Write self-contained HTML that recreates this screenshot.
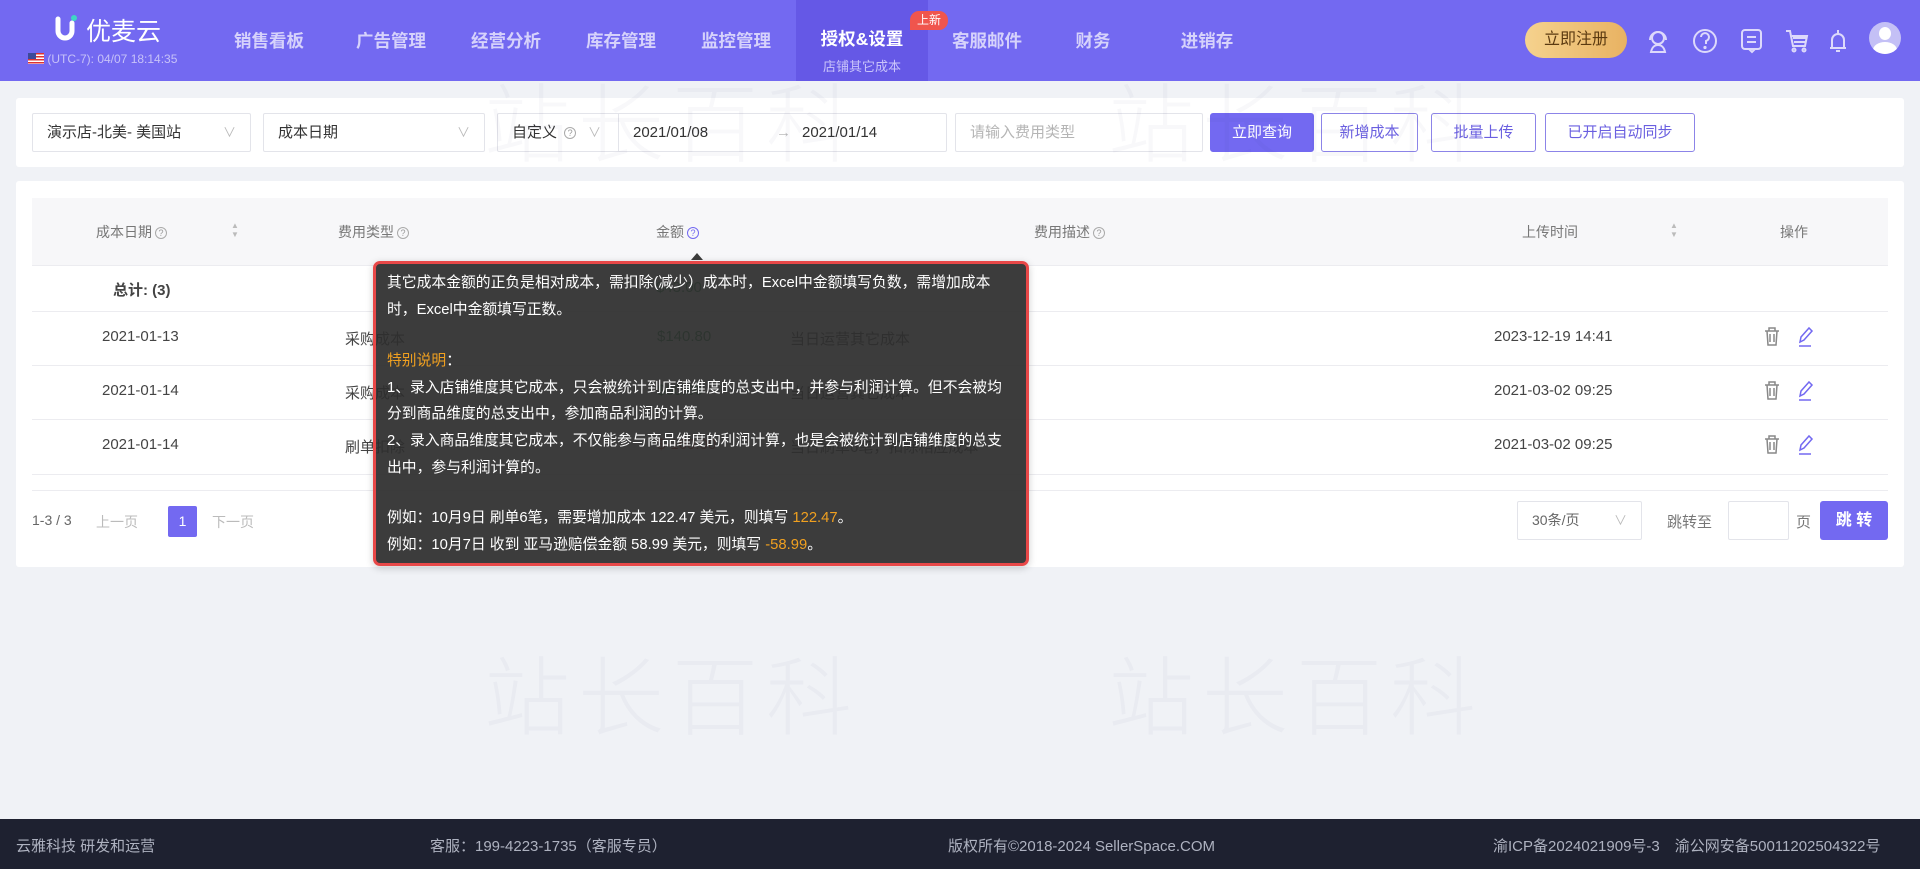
<!DOCTYPE html>
<html><head><meta charset="utf-8"><style>
*{box-sizing:border-box;margin:0;padding:0}
body{width:1920px;height:869px;overflow:hidden;background:#f0f2f6;font-family:"Liberation Sans","Noto Sans CJK SC",sans-serif;position:relative;color:#333}
.abs{position:absolute}
.hdr{left:0;top:0;width:1920px;height:81px;background:#7369f1}
.nav{top:28px;font-size:17.5px;font-weight:bold;color:#d6d2fb;transform:translateX(-50%);white-space:nowrap}
.wm{font-size:86px;color:rgba(60,70,100,.035);letter-spacing:8px;white-space:nowrap;font-weight:300;z-index:5}
.card{background:#fff;border-radius:3px}
.inp{top:113px;height:39px;border:1px solid #e3e4ea;border-radius:2px;background:#fff;font-size:15px;color:#333;line-height:37px;padding-left:14px}
.chev{position:absolute;right:14px;top:0;color:#bbb;font-size:13px}
.btn{top:113px;height:39px;border:1px solid #8c84e8;border-radius:3px;font-size:15px;color:#6a5fe0;line-height:37px;text-align:center;background:#fff}
.th{top:222px;font-size:14px;color:#777;white-space:nowrap}
.q{display:inline-block;width:12px;height:12px;border:1px solid #aaa;border-radius:50%;font-size:9px;line-height:10px;text-align:center;color:#999;vertical-align:1px;margin-left:3px}
.td{font-size:15px;color:#444;white-space:nowrap}
.line{left:32px;width:1856px;height:1px;background:#ececf0}
.tip{left:373px;top:261px;width:656px;height:305px;border:3px solid #e84848;border-radius:7px;background:rgba(45,45,45,.93);color:#fff;font-size:14.8px;padding:6px 0 0 11px;line-height:26.6px;box-shadow:0 2px 8px rgba(0,0,0,.2);white-space:nowrap;z-index:6}
.or{color:#f0a020}
.ft{top:835px;font-size:15px;color:#aeb2c0;white-space:nowrap}
</style></head><body>
<div class="abs hdr"></div>
<div class="abs" style="left:796px;top:0;width:132px;height:81px;background:#6558e6"></div>
<svg class="abs" style="left:52px;top:14px" width="30" height="30" viewBox="0 0 30 30"><path d="M6 5v12a7 7 0 0 0 14 0V9" stroke="#fff" stroke-width="5" fill="none" stroke-linecap="round"/><circle cx="22" cy="4" r="3" fill="#3fd6c4"/></svg>
<div class="abs" style="left:86px;top:12px;font-size:25px;color:#fff;">优麦云</div>
<div class="abs" style="left:28px;top:52px;font-size:12px;color:#c7c2f8;white-space:nowrap"><span style="display:inline-block;width:16px;height:11px;background:repeating-linear-gradient(#d33 0 1.5px,#fff 1.5px 3px);position:relative;vertical-align:-1px"><span style="position:absolute;left:0;top:0;width:8px;height:6px;background:#3c4a9a"></span></span> (UTC-7): 04/07 18:14:35</div>
<div class="abs nav" style="left:269px">销售看板</div>
<div class="abs nav" style="left:391px">广告管理</div>
<div class="abs nav" style="left:506px">经营分析</div>
<div class="abs nav" style="left:621px">库存管理</div>
<div class="abs nav" style="left:736px">监控管理</div>
<div class="abs nav" style="left:862px;top:26px;color:#fff">授权&amp;设置</div>
<div class="abs" style="left:862px;top:56px;transform:translateX(-50%);font-size:13px;color:#c9c4fa;white-space:nowrap">店铺其它成本</div>
<div class="abs" style="left:910px;top:11px;width:38px;height:19px;background:#f0554d;border-radius:9px 9px 9px 0;color:#fff;font-size:12px;text-align:center;line-height:19px">上新</div>
<div class="abs nav" style="left:987px">客服邮件</div>
<div class="abs nav" style="left:1093px">财务</div>
<div class="abs nav" style="left:1207px">进销存</div>
<div class="abs" style="left:1525px;top:22px;width:102px;height:36px;border-radius:18px;background:linear-gradient(90deg,#f5d28e,#e8b262);color:#5b3a10;font-size:16px;text-align:center;line-height:36px">立即注册</div>
<svg class="abs" style="left:1646px;top:26px" width="250" height="30" viewBox="0 0 250 30" fill="none" stroke="#ddd9fb" stroke-width="2">
<circle cx="12" cy="12" r="6"/><path d="M4 14a8 8 0 0 1 16 0M5 26c1-5 4-7 7-7s6 2 7 7z"/>
<circle cx="59" cy="15" r="11"/><path d="M55 11a4 4 0 1 1 5 4v3"/><circle cx="59" cy="21.5" r=".6" fill="#ddd9fb"/>
<rect x="96" y="4" width="19" height="19" rx="3"/><path d="M101 11h9M101 16h9M103 23l3 3 3-3"/>
<path d="M140 5h4l3 15h12l2-10h-15M147 12h13M148 16h12"/><circle cx="148" cy="24" r="1.5"/><circle cx="158" cy="24" r="1.5"/>
<path d="M186 22V14a6 6 0 0 1 12 0v8h2h-16M190 25h4M192 4v4"/>
</svg>
<div class="abs" style="left:1869px;top:22px;width:32px;height:32px;border-radius:50%;background:#c4c0f6;overflow:hidden"><div style="position:absolute;left:10px;top:5px;width:12px;height:13px;border-radius:50%;background:#fff"></div><div style="position:absolute;left:4px;top:20px;width:24px;height:16px;border-radius:50%;background:#fff"></div></div>

<div class="abs card" style="left:16px;top:98px;width:1888px;height:69px"></div>
<div class="abs inp" style="left:32px;width:219px">演示店-北美- 美国站<span class="chev">∨</span></div>
<div class="abs inp" style="left:263px;width:222px">成本日期<span class="chev">∨</span></div>
<div class="abs inp" style="left:497px;width:450px">自定义 <span class="q">?</span><span style="position:absolute;left:90px;color:#bbb;font-size:13px">∨</span><span style="position:absolute;left:120px;top:0;bottom:0;border-left:1px solid #e3e4ea"></span><span style="position:absolute;left:135px">2021/01/08</span><span style="position:absolute;left:278px;color:#bbb">→</span><span style="position:absolute;left:304px">2021/01/14</span></div>
<div class="abs inp" style="left:955px;width:248px;color:#b5b5b5">请输入费用类型</div>
<div class="abs btn" style="left:1210px;width:104px;background:#7369f1;border-color:#7369f1;color:#fff">立即查询</div>
<div class="abs btn" style="left:1321px;width:97px">新增成本</div>
<div class="abs btn" style="left:1431px;width:105px">批量上传</div>
<div class="abs btn" style="left:1545px;width:150px">已开启自动同步</div>

<div class="abs card" style="left:16px;top:181px;width:1888px;height:386px"></div>
<div class="abs" style="left:32px;top:198px;width:1856px;height:67px;background:#f7f7f9"></div>
<div class="abs th" style="left:96px">成本日期<span class="q">?</span></div>
<div class="abs" style="left:231px;top:221px;font-size:8px;color:#bbb;line-height:9px">▲<br>▼</div>
<div class="abs th" style="left:338px">费用类型<span class="q">?</span></div>
<div class="abs th" style="left:656px">金额<span class="q" style="border-color:#7369f1;color:#7369f1">?</span></div>
<div class="abs th" style="left:1034px">费用描述<span class="q">?</span></div>
<div class="abs th" style="left:1522px">上传时间</div>
<div class="abs" style="left:1670px;top:221px;font-size:8px;color:#bbb;line-height:9px">▲<br>▼</div>
<div class="abs th" style="left:1780px">操作</div>
<div class="abs line" style="top:265px"></div>
<div class="abs td" style="left:113px;top:279px;font-weight:bold">总计: (3)</div>
<div class="abs td" style="left:656px;top:279px;color:#2a8a4a">$43.00</div>
<div class="abs line" style="top:311px"></div>
<div class="abs line" style="top:365px"></div>
<div class="abs line" style="top:419px"></div>
<div class="abs line" style="top:474px"></div>
<div class="abs line" style="top:490px"></div>
<div class="abs td" style="left:102px;top:328px">2021-01-13</div>
<div class="abs td" style="left:102px;top:382px">2021-01-14</div>
<div class="abs td" style="left:102px;top:436px">2021-01-14</div>
<div class="abs td" style="left:345px;top:328px">采购成本</div>
<div class="abs td" style="left:345px;top:382px">采购成本</div>
<div class="abs td" style="left:345px;top:436px">刷单扣除</div>
<div class="abs td" style="left:657px;top:328px;color:#2a8a4a">$140.80</div>
<div class="abs td" style="left:657px;top:382px;color:#2a8a4a">$60.00</div>
<div class="abs td" style="left:657px;top:436px;color:#c43030">$-160.00</div>
<div class="abs td" style="left:790px;top:328px">当日运营其它成本</div>
<div class="abs td" style="left:790px;top:382px">当日运营其它成本</div>
<div class="abs td" style="left:790px;top:436px">当日刷单6笔，扣除相应成本</div>
<div class="abs td" style="left:1494px;top:328px">2023-12-19 14:41</div>
<div class="abs td" style="left:1494px;top:382px">2021-03-02 09:25</div>
<div class="abs td" style="left:1494px;top:436px">2021-03-02 09:25</div>
<svg class="abs" style="left:1762px;top:326px" width="60" height="150" viewBox="0 0 60 150" fill="none" stroke-width="1.5">
<g id="r"><g stroke="#888"><path d="M3 5h14M7 5V2h6v3M5 5l1 14h8l1-14M8 8v8M12 8v8"/></g><g stroke="#7369f1"><path d="M38 16l1-5 8-9 3 3-8 9z M37 20h12"/></g></g>
<use href="#r" y="54"/><use href="#r" y="108"/></svg>

<div class="abs" style="left:32px;top:512px;font-size:14px;color:#666">1-3 / 3</div>
<div class="abs" style="left:96px;top:512px;font-size:14px;color:#bbb">上一页</div>
<div class="abs" style="left:168px;top:506px;width:29px;height:31px;background:#7369f1;border-radius:2px;color:#fff;font-size:14px;text-align:center;line-height:31px">1</div>
<div class="abs" style="left:212px;top:512px;font-size:14px;color:#bbb">下一页</div>
<div class="abs inp" style="left:1517px;top:501px;width:125px;height:39px;color:#666;font-size:14px">30条/页<span class="chev">∨</span></div>
<div class="abs" style="left:1667px;top:511px;font-size:15px;color:#777">跳转至</div>
<div class="abs inp" style="left:1728px;top:501px;width:61px;height:39px"></div>
<div class="abs" style="left:1796px;top:511px;font-size:15px;color:#777">页</div>
<div class="abs" style="left:1820px;top:501px;width:68px;height:39px;background:#7369f1;border-radius:3px;color:#fff;font-size:16px;text-align:center;line-height:39px;font-weight:bold">跳 转</div>

<div class="abs wm" style="left:484px;top:55px">站长百科</div>
<div class="abs wm" style="left:1108px;top:55px">站长百科</div>
<div class="abs wm" style="left:484px;top:628px">站长百科</div>
<div class="abs wm" style="left:1108px;top:628px">站长百科</div>

<div class="abs" style="left:691px;top:253px;width:0;height:0;border-left:6px solid transparent;border-right:6px solid transparent;border-bottom:7px solid #3c3c3c;z-index:6"></div>
<div class="abs tip">
<div>其它成本金额的正负是相对成本，需扣除(减少）成本时，Excel中金额填写负数，需增加成本</div>
<div>时，Excel中金额填写正数。</div>
<div style="height:25px"></div>
<div><span class="or">特别说明</span>：</div>
<div>1、录入店铺维度其它成本，只会被统计到店铺维度的总支出中，并参与利润计算。但不会被均</div>
<div>分到商品维度的总支出中，参加商品利润的计算。</div>
<div>2、录入商品维度其它成本，不仅能参与商品维度的利润计算，也是会被统计到店铺维度的总支</div>
<div>出中，参与利润计算的。</div>
<div style="height:24px"></div>
<div>例如：10月9日 刷单6笔，需要增加成本 122.47 美元，则填写 <span class="or">122.47</span>。</div>
<div>例如：10月7日 收到 亚马逊赔偿金额 58.99 美元，则填写 <span class="or">-58.99</span>。</div>
</div>

<div class="abs" style="left:0;top:819px;width:1920px;height:50px;background:#1e2130"></div>
<div class="abs ft" style="left:16px">云雅科技 研发和运营</div>
<div class="abs ft" style="left:430px">客服：199-4223-1735（客服专员）</div>
<div class="abs ft" style="left:948px">版权所有©2018-2024 SellerSpace.COM</div>
<div class="abs ft" style="left:1493px">渝ICP备2024021909号-3　渝公网安备50011202504322号</div>
</body></html>
